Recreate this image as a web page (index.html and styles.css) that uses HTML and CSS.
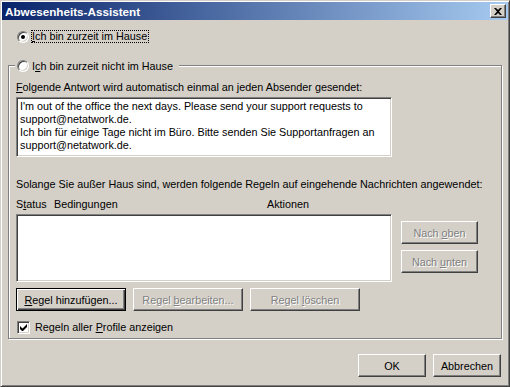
FILE: index.html
```html
<!DOCTYPE html>
<html lang="de">
<head>
    <meta charset="UTF-8">
    <title>Abwesenheits-Assistent</title>
    <link rel="stylesheet" href="styles.css">
</head>
<body>

    <div class="window">
        <div class="titlebar">
            <span class="title">Abwesenheits-Assistent</span>
            <span class="close">
                <svg width="8" height="7" viewBox="0 0 8 7"><path d="M0 0h2l2 2 2-2h2L5 3.5 8 7H6L4 5 2 7H0l3-3.5z" fill="#000"/></svg>
            </span>
        </div>

        <div class="content">
            <div class="radio-row first">
                <span class="radio checked"></span>
                <span class="focus"><u>I</u>ch bin zurzeit im Hause</span>
            </div>

            <fieldset class="group">
                <legend><span class="radio"></span><span>I<u>c</u>h bin zurzeit nicht im Hause</span></legend>

                <div class="label reply-label"><u>F</u>olgende Antwort wird automatisch einmal an jeden Absender gesendet:</div>
                <div class="reply">
                    <div>I'm out of the office the next days. Please send your support requests to</div>
                    <div>support@netatwork.de.</div>
                    <div>Ich bin für einige Tage nicht im Büro. Bitte senden Sie Supportanfragen an</div>
                    <div>support@netatwork.de.</div>
                </div>

                <div class="label rules-label">Solange Sie außer Haus sind, werden folgende Regeln auf eingehende Nachrichten angewendet:</div>
                <div class="columns">
                    <span class="col-status">S<u>t</u>atus</span>
                    <span class="col-cond">Bedingungen</span>
                    <span class="col-act">Aktionen</span>
                </div>

                <div class="rules-row">
                    <div class="list"></div>
                    <div class="side-buttons">
                        <button type="button" class="btn disabled">Nach <u>o</u>ben</button>
                        <button type="button" class="btn disabled">Nach <u>u</u>nten</button>
                    </div>
                </div>

                <div class="button-row">
                    <button type="button" class="btn wide default"><u>R</u>egel hinzufügen...</button>
                    <button type="button" class="btn wide disabled">Regel <u>b</u>earbeiten...</button>
                    <button type="button" class="btn wide disabled">Regel <u>l</u>öschen</button>
                </div>

                <div class="check-row">
                    <span class="checkbox">
                        <svg width="7" height="7" viewBox="0 0 7 7"><path d="M0 2v3l2 2h1l4-4V0L2.5 4.5z" fill="#000"/></svg>
                    </span>
                    <span>Regeln aller <u>P</u>rofile anzeigen</span>
                </div>
            </fieldset>

            <div class="footer">
                <button type="button" class="btn dialog">OK</button>
                <button type="button" class="btn dialog">Abbrechen</button>
            </div>
        </div>
    </div>

</body>
</html>
```

FILE: styles.css
```css
body {
    margin: 0;
    font-family: "Liberation Sans", Arial, sans-serif;
    font-size: 10.8px;
    color: #000;
    background: #d4d0c8;
}
u {
    text-decoration: underline;
    text-underline-offset: 1px;
}
.window {
    width: 510px;
    height: 387px;
    box-sizing: border-box;
    padding: 1px;
    background: #d4d0c8;
    border: 1px solid;
    border-color: #d4d0c8 #404040 #404040 #d4d0c8;
    box-shadow: inset 1px 1px #fff, inset -1px -1px #808080;
}
.titlebar {
    height: 18px;
    display: flex;
    align-items: center;
    justify-content: space-between;
    padding: 0 2px 0 3px;
    background: linear-gradient(to right, #0a246a, #a6caf0);
}
.title {
    color: #fff;
    font-weight: bold;
    font-size: 11.7px;
}
.close {
    width: 16px;
    height: 14px;
    box-sizing: border-box;
    display: flex;
    align-items: center;
    justify-content: center;
    background: #d4d0c8;
    border: 1px solid;
    border-color: #fff #404040 #404040 #fff;
    box-shadow: inset -1px -1px #808080;
}
.content {
    padding: 0 6px 0 6px;
}
.radio-row {
    display: flex;
    align-items: center;
    height: 13px;
    margin: 10px 0 0 9px;
}
.radio {
    width: 12px;
    height: 12px;
    box-sizing: border-box;
    border-radius: 50%;
    border: 1px solid;
    border-color: #808080 #fff #fff #808080;
    box-shadow: inset 1px 1px #404040, inset -1px -1px #d4d0c8;
    background: #fff;
    margin-right: 3px;
    flex: none;
    display: flex;
    align-items: center;
    justify-content: center;
}
.radio.checked::after {
    content: "";
    width: 4px;
    height: 4px;
    border-radius: 50%;
    background: #000;
}
.focus {
    border: 1px dotted #000;
    line-height: 11px;
    padding: 0 1px 0 0;
    margin-left: -1px;
}
.group {
    margin: 16px 0 0 0;
    padding: 0 7px 4px 7px;
    border: 1px solid #808080;
    box-shadow: inset 1px 1px #fff, 1px 1px #fff;
    min-inline-size: 0;
}
.group legend {
    display: flex;
    align-items: center;
    height: 13px;
    margin-left: -1px;
    padding: 0 6px 0 2px;
    background: #d4d0c8;
}
.label {
    line-height: 13px;
    white-space: nowrap;
}
.reply-label {
    margin-top: 9px;
}
.reply {
    margin-top: 3px;
    height: 60px;
    box-sizing: border-box;
    padding: 2px 3px;
    line-height: 13px;
    background: #fff;
    border: 1px solid;
    border-color: #808080 #fff #fff #808080;
    box-shadow: inset 1px 1px #404040, inset -1px -1px #d4d0c8;
    width: 376px;
    white-space: nowrap;
}
.rules-label {
    margin-top: 21px;
}
.columns {
    display: flex;
    margin-top: 7px;
    line-height: 13px;
}
.col-status {
    width: 38px;
}
.col-cond {
    width: 213px;
}
.rules-row {
    display: flex;
    margin-top: 3px;
}
.list {
    width: 376px;
    height: 68px;
    box-sizing: border-box;
    background: #fff;
    border: 1px solid;
    border-color: #808080 #fff #fff #808080;
    box-shadow: inset 1px 1px #404040, inset -1px -1px #d4d0c8;
}
.side-buttons {
    display: flex;
    flex-direction: column;
    gap: 6px;
    margin: 7px 0 0 9px;
}
.btn {
    font-family: inherit;
    font-size: 10.8px;
    color: #000;
    height: 23px;
    width: 77px;
    padding: 0;
    box-sizing: border-box;
    background: #d4d0c8;
    border: 1px solid;
    border-color: #fff #404040 #404040 #fff;
    box-shadow: inset -1px -1px #808080;
}
.btn.disabled {
    color: #808080;
    text-shadow: 1px 1px #fff;
}
.btn.default {
    border-color: #000;
    box-shadow: inset 1px 1px #fff, inset -1px -1px #404040, inset -2px -2px #808080;
}
.button-row {
    display: flex;
    gap: 7px;
    margin-top: 6px;
}
.btn.wide {
    width: 110px;
}
.check-row {
    display: flex;
    align-items: center;
    gap: 5px;
    height: 13px;
    margin: 10px 0 0 1px;
    line-height: 13px;
}
.checkbox {
    width: 13px;
    height: 13px;
    box-sizing: border-box;
    display: flex;
    align-items: center;
    justify-content: center;
    background: #fff;
    border: 1px solid;
    border-color: #808080 #fff #fff #808080;
    box-shadow: inset 1px 1px #404040, inset -1px -1px #d4d0c8;
}
.footer {
    display: flex;
    justify-content: flex-end;
    gap: 7px;
    margin: 15px 1px 0 0;
}
.btn.dialog {
    width: 68px;
}
```
